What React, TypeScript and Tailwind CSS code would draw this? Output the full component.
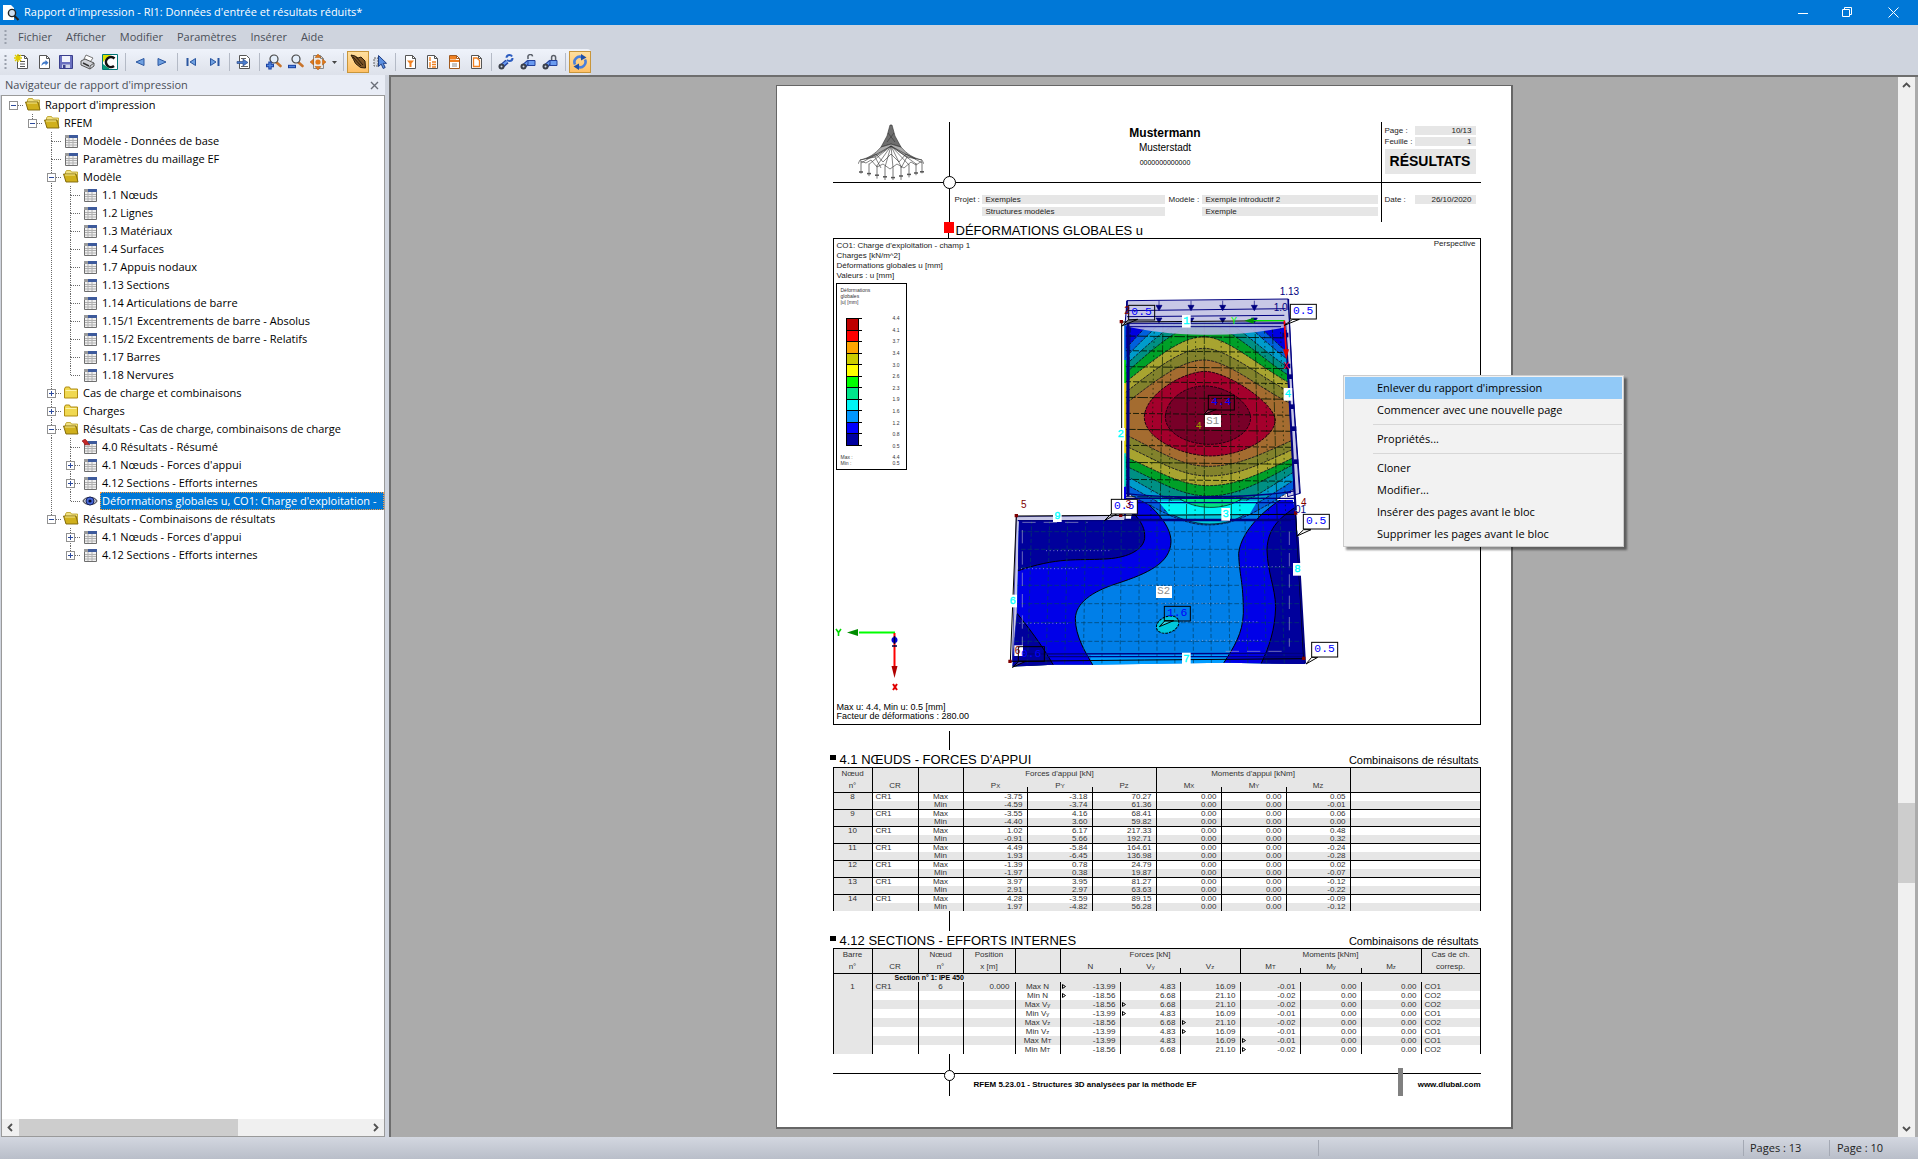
import type { ReactNode } from 'react'

type NodeIcon = 'open' | 'closed' | 'table' | 'pinned' | 'eye'

type TreeRow = {
  depth: number
  label: string
  icon: NodeIcon
  toggle?: '+' | '-'
  selected?: boolean
}

const menus = ['Fichier', 'Afficher', 'Modifier', 'Paramètres', 'Insérer', 'Aide']

const tree: TreeRow[] = [
  { depth: 0, label: "Rapport d'impression", icon: 'open', toggle: '-' },
  { depth: 1, label: 'RFEM', icon: 'open', toggle: '-' },
  { depth: 2, label: 'Modèle - Données de base', icon: 'table' },
  { depth: 2, label: 'Paramètres du maillage EF', icon: 'table' },
  { depth: 2, label: 'Modèle', icon: 'open', toggle: '-' },
  { depth: 3, label: '1.1 Nœuds', icon: 'table' },
  { depth: 3, label: '1.2 Lignes', icon: 'table' },
  { depth: 3, label: '1.3 Matériaux', icon: 'table' },
  { depth: 3, label: '1.4 Surfaces', icon: 'table' },
  { depth: 3, label: '1.7 Appuis nodaux', icon: 'table' },
  { depth: 3, label: '1.13 Sections', icon: 'table' },
  { depth: 3, label: '1.14 Articulations de barre', icon: 'table' },
  { depth: 3, label: '1.15/1 Excentrements de barre - Absolus', icon: 'table' },
  { depth: 3, label: '1.15/2 Excentrements de barre - Relatifs', icon: 'table' },
  { depth: 3, label: '1.17 Barres', icon: 'table' },
  { depth: 3, label: '1.18 Nervures', icon: 'table' },
  { depth: 2, label: 'Cas de charge et combinaisons', icon: 'closed', toggle: '+' },
  { depth: 2, label: 'Charges', icon: 'closed', toggle: '+' },
  { depth: 2, label: 'Résultats - Cas de charge, combinaisons de charge', icon: 'open', toggle: '-' },
  { depth: 3, label: '4.0 Résultats - Résumé', icon: 'pinned' },
  { depth: 3, label: "4.1 Nœuds - Forces d'appui", icon: 'table', toggle: '+' },
  { depth: 3, label: '4.12 Sections - Efforts internes', icon: 'table', toggle: '+' },
  { depth: 3, label: "Déformations globales u, CO1: Charge d'exploitation -", icon: 'eye', selected: true },
  { depth: 2, label: 'Résultats - Combinaisons de résultats', icon: 'open', toggle: '-' },
  { depth: 3, label: "4.1 Nœuds - Forces d'appui", icon: 'table', toggle: '+' },
  { depth: 3, label: '4.12 Sections - Efforts internes', icon: 'table', toggle: '+' },
]

const legend = [
  { color: '#be0000', value: '4.4' },
  { color: '#ff0000', value: '4.1' },
  { color: '#ffa500', value: '3.7' },
  { color: '#cccc00', value: '3.4' },
  { color: '#ffff00', value: '3.0' },
  { color: '#00ff00', value: '2.6' },
  { color: '#00e68c', value: '2.3' },
  { color: '#00f5f5', value: '1.9' },
  { color: '#0096ff', value: '1.6' },
  { color: '#0000ff', value: '1.2' },
  { color: '#0000a0', value: '0.8' },
]

const supports = [
  { node: '8', max: ['-3.75', '-3.18', '70.27', '0.00', '0.00', '0.05'], min: ['-4.59', '-3.74', '61.36', '0.00', '0.00', '-0.01'] },
  { node: '9', max: ['-3.55', '4.16', '68.41', '0.00', '0.00', '0.06'], min: ['-4.40', '3.60', '59.82', '0.00', '0.00', '0.00'] },
  { node: '10', max: ['1.02', '6.17', '217.33', '0.00', '0.00', '0.48'], min: ['-0.91', '5.66', '192.71', '0.00', '0.00', '0.32'] },
  { node: '11', max: ['4.49', '-5.84', '164.61', '0.00', '0.00', '-0.24'], min: ['1.93', '-6.45', '136.98', '0.00', '0.00', '-0.28'] },
  { node: '12', max: ['-1.39', '0.78', '24.79', '0.00', '0.00', '0.02'], min: ['-1.97', '0.38', '19.87', '0.00', '0.00', '-0.07'] },
  { node: '13', max: ['3.97', '3.95', '81.27', '0.00', '0.00', '-0.12'], min: ['2.91', '2.97', '63.63', '0.00', '0.00', '-0.22'] },
  { node: '14', max: ['4.28', '-3.59', '89.15', '0.00', '0.00', '-0.09'], min: ['1.97', '-4.82', '56.28', '0.00', '0.00', '-0.12'] },
]

// mark = index of the value that is the extreme one in the row
const forces = [
  { kind: 'Max N', sub: '', mark: 0, low: true },
  { kind: 'Min N', sub: '', mark: 0, low: false },
  { kind: 'Max V', sub: 'y', mark: 1, low: false },
  { kind: 'Min V', sub: 'y', mark: 1, low: true },
  { kind: 'Max V', sub: 'z', mark: 2, low: false },
  { kind: 'Min V', sub: 'z', mark: 2, low: true },
  { kind: 'Max M', sub: 'T', mark: 3, low: true },
  { kind: 'Min M', sub: 'T', mark: 3, low: false },
]
const lowValues = ['-13.99', '4.83', '16.09', '-0.01', '0.00', '0.00']
const highValues = ['-18.56', '6.68', '21.10', '-0.02', '0.00', '0.00']

/* ---------- small icons ---------- */

function Ico({ children }: { children: ReactNode }) {
  return (
    <svg width="16" height="16" viewBox="0 0 16 16" fill="none" className="shrink-0">
      {children}
    </svg>
  )
}

function Sheet({ stroke = '#555', fill = '#fff' }: { stroke?: string; fill?: string }) {
  return (
    <>
      <path d="M3.5 1.5h7l3 3v10h-10z" fill={fill} stroke={stroke} />
      <path d="M10.5 1.5v3h3" stroke={stroke} />
    </>
  )
}

function Arrow({ d }: { d: string }) {
  return <path d={d} fill="#6fa0e0" stroke="#2a56a0" strokeLinejoin="round" />
}

function Lens({ sign }: { sign: '+' | '-' }) {
  return (
    <Ico>
      <path d="M10 8l4.5 4" stroke="#c8742c" strokeWidth="2.6" strokeLinecap="round" />
      <circle cx="8" cy="5" r="4" fill="#e4eefa" stroke="#444" strokeWidth="1.2" />
      <path d={sign === '+' ? 'M0 11.5h8M4 7.5v8' : 'M0 12.5h8'} stroke="#1b40a0" strokeWidth="3.4" />
      <path d={sign === '+' ? 'M1 11.5h6M4 8.5v6' : 'M1 12.5h6'} stroke="#4f86e0" strokeWidth="1.4" />
    </Ico>
  )
}

function LockIcon({ kind }: { kind: 'sync' | 'open' | 'closed' }) {
  return (
    <Ico>
      <path d="M4 12l5-4.5" stroke="#22409a" strokeWidth="4.6" />
      <path d="M4.5 11.2L9 7.5" stroke="#6a9bf0" strokeWidth="2.2" />
      <circle cx="3.5" cy="12.5" r="3" fill="#3a3f4a" />
      <circle cx="3.5" cy="12.5" r="1" fill="#cfd6e4" />
      {kind === 'sync' ? (
        <circle cx="11.5" cy="4" r="3" stroke="#2c5cc0" strokeWidth="2" strokeDasharray="7.4 2" />
      ) : (
        <>
          <path d={kind === 'open' ? 'M8 5V3.4a2.3 2.3 0 014.6-1' : 'M9.6 7V3.6a2 2 0 014 0V7'} stroke="#5a5f68" strokeWidth="1.5" />
          <path d="M8 6.500h7v5H8z" fill="#6a9bf0" stroke="#22409a" />
        </>
      )}
    </Ico>
  )
}

const toolGroups: { name: string; active?: boolean; icon: ReactNode }[][] = [
  [
    { name: 'Nouveau', icon: <Ico><Sheet /><path d="M6 7.500h5M6 10h5M6 12.500h5" stroke="#555" /><path d="M4 0v8M0 4h8M1 1l6 6M7 1L1 7" stroke="#e0cc00" strokeWidth="1.4" /></Ico> },
    { name: 'Ouvrir', icon: <Ico><Sheet /><path d="M5.5 12c0-3 1.5-4.5 4-4.5V6l3 2.8-3 2.7V9.800c-2 0-3 .6-4 2.200z" fill="#3f78c8" /></Ico> },
    { name: 'Enregistrer', icon: <Ico><path d="M1.5 1.5h13v13h-13z" fill="#6a70c0" stroke="#3a3f8c" /><path d="M4 2h8v6H4z" fill="#f1f3fb" /><path d="M4 10.500h8V14H4z" fill="#d2d6ea" /><path d="M5 11h2.500v3H5z" fill="#3a3f8c" /></Ico> },
    { name: 'Imprimer', icon: <Ico><path d="M6 1l7 3-3 4-6-3z" fill="#fff" stroke="#777" /><path d="M1 7l4-2 9 4v3l-4 3-9-4z" fill="#d0d2d8" stroke="#555" /><path d="M10 15v-3l4-3" stroke="#555" /><path d="M3 9l6 3" stroke="#333" strokeWidth="1.4" /></Ico> },
    { name: 'Dlubal', icon: <Ico><path d="M.5.5h15v15H.5z" fill="#fff" stroke="#077" /><path d="M1 1h8L5 4 1 8z" fill="#d8e000" /><path d="M1 10v5h7z" fill="#0a9a78" /><path d="M12.500 4.500a5 5 0 10-.5 7.500" stroke="#111" strokeWidth="2.600" /></Ico> },
  ],
  [
    { name: 'Précédent', icon: <Ico><Arrow d="M12 4.500v7L4 8z" /></Ico> },
    { name: 'Suivant', icon: <Ico><Arrow d="M4 4.500v7L12 8z" /></Ico> },
  ],
  [
    { name: 'Début', icon: <Ico><path d="M3.500 4v8" stroke="#2a56a0" strokeWidth="2" /><Arrow d="M11.500 4.500v7L6 8z" /></Ico> },
    { name: 'Fin', icon: <Ico><path d="M12.500 4v8" stroke="#2a56a0" strokeWidth="2" /><Arrow d="M4.500 4.500v7L10 8z" /></Ico> },
  ],
  [
    { name: 'Aller à la page', icon: <Ico><path d="M3.500 1.500h7l3 3v10h-10z" fill="#fff" stroke="#555" /><path d="M5 4.500h5M5 12.500h7" stroke="#666" /><path d="M1 7.500h6V5l5 3.500L7 12V9.500H1z" fill="#4a7ccc" stroke="#24427c" strokeWidth=".6" /></Ico> },
  ],
  [
    { name: 'Zoom avant', icon: <Lens sign="+" /> },
    { name: 'Zoom arrière', icon: <Lens sign="-" /> },
    { name: 'Zoom page', icon: <Ico><Sheet fill="#e9e9e9" stroke="#888" /><path d="M8 0l3 3.500H5zM8 16l3-3.500H5zM0 8l3.500-3v6zM16 8l-3.500-3v6z" fill="#e27a1a" stroke="#a85208" strokeWidth=".5" /><circle cx="8" cy="8" r="2.600" fill="#e27a1a" /></Ico> },
  ],
  [
    { name: 'Déplacer', active: true, icon: <Ico><path d="M1 1l4 1 3 2 3-1 4 4 .5 7-5-.5-5-4-2-4z" fill="#7c5426" stroke="#2a1a08" /><path d="M3 3l8 9M6 3l7 8" stroke="#2a1a08" /></Ico> },
    { name: 'Sélectionner', icon: <Ico><path d="M2 4h4v8H2z" fill="#d8dbe2" stroke="#666" strokeDasharray="2 1" /><path d="M6.500 1.500v11l2.700-2.400 2 4.400 2-1-2-4.200h3.300z" fill="#5b8fe0" stroke="#1f3f86" /></Ico> },
  ],
  [
    { name: 'Filtrer', icon: <Ico><Sheet /><path d="M5 6.500h7L9.500 9.500V13h-2V9.500z" fill="#f08020" /></Ico> },
    { name: 'Numérotation', icon: <Ico><Sheet /><path d="M6 3v4M8 8h4M8 10.500h4M8 13h4M6 8v5.500" stroke="#f08020" strokeWidth="1.400" /></Ico> },
    { name: 'En-tête', icon: <Ico><Sheet stroke="#a05a20" /><path d="M4 2h6v3.500H4z" fill="#f08020" /><path d="M4 6h9v2H4z" fill="#f08020" /><path d="M6 10h5M6 12h5" stroke="#8a8a8a" /></Ico> },
    { name: 'Page de garde', icon: <Ico><Sheet /><path d="M5.500 4h3.500l2.500 2.500V12.500h-6z" stroke="#f08020" strokeWidth="1.300" /></Ico> },
  ],
  [
    { name: 'Actualiser les liens', icon: <LockIcon kind="sync" /> },
    { name: 'Déverrouiller', icon: <LockIcon kind="open" /> },
    { name: 'Verrouiller', icon: <LockIcon kind="closed" /> },
  ],
  [
    { name: 'Mise à jour', active: true, icon: <Ico><path d="M3 10.500A5.400 5.400 0 0110 3.200" stroke="#4a7fdc" strokeWidth="2.600" /><path d="M13 5.500A5.400 5.400 0 016 12.800" stroke="#4a7fdc" strokeWidth="2.600" /><path d="M9 0l5.500 3.400L9 6.500zM7 16l-5.500-3.400L7 9.500z" fill="#1e4fa8" /></Ico> },
  ],
]

function TreeIcon({ kind }: { kind: NodeIcon }) {
  if (kind === 'open') {
    return (
      <Ico>
        <path d="M2.500 3l1-1.500h4l1 1.500h6V12h-12z" fill="#f0e080" stroke="#b89c1c" strokeWidth=".8" />
        <path d="M.5 5h12.500l2 8H3z" fill="#d0b01c" stroke="#7c6408" strokeWidth=".9" />
        <path d="M2 6h10" stroke="#f4e890" />
      </Ico>
    )
  }
  if (kind === 'closed') {
    return (
      <Ico>
        <path d="M1.500 4l1-2h4l1 2h7v9h-13z" fill="#f0d850" stroke="#b08c10" />
        <path d="M2.500 5.500h11" stroke="#fdf3a8" />
      </Ico>
    )
  }
  if (kind === 'eye') {
    return (
      <Ico>
        <path d="M1 8c3-5 11-5 14 0-3 5-11 5-14 0z" fill="#c9ccd6" stroke="#55565e" strokeWidth="1.200" />
        <circle cx="8" cy="8" r="4" fill="#4668d8" stroke="#16225c" />
        <circle cx="8" cy="8" r="1.600" fill="#0a0f30" />
      </Ico>
    )
  }
  return (
    <Ico>
      <path d="M2.500 2.500h12v12h-12z" fill="#f0f0f0" stroke="#6e6e6e" />
      <path d="M6 2h9v3H6z" fill="#3d5a9c" />
      <path d="M2 2h4v3H2z" fill="#9a9a9a" />
      <path d="M3 7.500h11M3 9.500h11M3 12h11M6 5v9M10 5v9" stroke="#b0b0b0" />
      {kind === 'pinned' && <path d="M0 2l3-2 2 2 1 2 2 2-2-.5L3 6 2 4z" fill="#c62828" stroke="#8c1010" strokeWidth=".6" />}
    </Ico>
  )
}

/* ---------- window chrome ---------- */

function TitleBar() {
  return (
    <header className="flex h-[25px] shrink-0 items-center bg-[#0078d7] text-white">
      <svg width="18" height="18" viewBox="0 0 18 18" className="ml-[2px]">
        <path d="M1 1h8l3 3v12H1z" fill="#fff" />
        <circle cx="10" cy="9" r="3.600" fill="#cfe0f2" stroke="#222" strokeWidth="1.400" />
        <path d="M12.500 12l4 4" stroke="#222" strokeWidth="2.200" />
      </svg>
      <h1 className="ml-[4px] text-[11px]">Rapport d'impression - RI1: Données d'entrée et résultats réduits*</h1>
      <div className="ml-auto flex pr-[2px] text-white">
        <button aria-label="Réduire" className="flex h-[25px] w-[45px] items-center justify-center">
          <svg width="10" height="10"><path d="M0 5.500h10" stroke="currentColor" /></svg>
        </button>
        <button aria-label="Restaurer" className="flex h-[25px] w-[45px] items-center justify-center">
          <svg width="11" height="11" fill="none" stroke="currentColor"><path d="M.5 2.500h7v7h-7zM2.500 2.500v-2h7v7h-2" /></svg>
        </button>
        <button aria-label="Fermer" className="flex h-[25px] w-[46px] items-center justify-center">
          <svg width="11" height="11" fill="none" stroke="currentColor"><path d="M.5.500l10 10M10.500.500l-10 10" /></svg>
        </button>
      </div>
    </header>
  )
}

function Grip() {
  return (
    <svg width="3" height="14" className="shrink-0">
      <path d="M1.500 0v14" stroke="#9aa0ac" strokeWidth="2" strokeDasharray="2 2" />
    </svg>
  )
}

function MenuBar() {
  return (
    <nav className="flex h-[24px] shrink-0 items-center pl-[4px]">
      <Grip />
      <div className="ml-[11px] flex gap-[14px]">
        {menus.map((m) => (
          <button key={m} className="text-[11px] text-[#4b4f58]">{m}</button>
        ))}
      </div>
    </nav>
  )
}

function Toolbar() {
  return (
    <div className="flex h-[26px] shrink-0 items-center">
      <div className="flex h-[26px] items-center rounded-r bg-gradient-to-b from-[#eff3fb] to-[#dde1ea] pl-[4px]">
        <Grip />
        <div className="ml-[4px] flex">
          {toolGroups.map((group, i) => (
            <div key={i} className="flex items-center">
              {i > 0 && <span className="ml-[4px] mr-[3px] h-[18px] w-px bg-[#b4bac6]" />}
              {group.map((tool) => (
                <button
                  key={tool.name}
                  aria-label={tool.name}
                  className={
                    tool.active
                      ? 'flex h-[22px] w-[22px] items-center justify-center border border-[#c8963c] bg-gradient-to-b from-[#ffdf9e] to-[#ffc066]'
                      : 'flex h-[22px] w-[22px] items-center justify-center'
                  }
                >
                  {tool.icon}
                </button>
              ))}
              {i === 4 && (
                <button aria-label="Options de zoom" className="flex h-[22px] w-[10px] items-center justify-center">
                  <svg width="5" height="3"><path d="M0 0h5L2.500 3z" fill="#444" /></svg>
                </button>
              )}
            </div>
          ))}
        </div>
      </div>
    </div>
  )
}

/* ---------- navigator ---------- */

function continues(index: number, depth: number) {
  for (let i = index + 1; i < tree.length; i++) {
    if (tree[i].depth < depth) return false
    if (tree[i].depth === depth) return true
  }
  return false
}

function Guide({ index, column }: { index: number; column: number }) {
  const row = tree[index]
  const own = column === row.depth
  const more = continues(index, column)
  return (
    <span className="relative flex h-[18px] w-[19px] shrink-0 items-center justify-center">
      <svg width="19" height="18" stroke="#6a6a6a" strokeDasharray="1 1" className="absolute inset-0">
        {own && column > 0 && <path d="M9.500 0v9" />}
        {more && (own ? <path d="M9.500 9v9" /> : <path d="M9.500 0v18" />)}
        {own && <path d="M10 9.500h9" />}
      </svg>
      {own && row.toggle && (
        <button
          aria-label={row.toggle === '+' ? 'Développer' : 'Réduire'}
          className="relative flex h-[9px] w-[9px] items-center justify-center border border-[#919191] bg-white"
        >
          <svg width="7" height="7" stroke="#2c4a9c"><path d={row.toggle === '+' ? 'M1 3.500h5M3.500 1v5' : 'M1 3.500h5'} /></svg>
        </button>
      )}
    </span>
  )
}

function Chevron({ d }: { d: string }) {
  return (
    <svg width="9" height="9" viewBox="0 0 9 9" fill="none" stroke="#505050" strokeWidth="1.800">
      <path d={d} />
    </svg>
  )
}

function Navigator() {
  return (
    <aside className="flex w-[385px] shrink-0 flex-col">
      <div className="flex h-[20px] items-center justify-between bg-[#e9edf6] pl-[5px] pr-[6px]">
        <h2 className="text-[11px] text-[#4b4f58]">Navigateur de rapport d'impression</h2>
        <button aria-label="Fermer le navigateur">
          <svg width="9" height="9" stroke="#6a6e78" strokeWidth="1.400"><path d="M1 1l7 7M8 1L1 8" /></svg>
        </button>
      </div>
      <div className="ml-px flex min-h-0 flex-1 flex-col border border-[#9a9a9a] bg-white">
        <ul className="flex-1 overflow-hidden pl-[2px]">
          {tree.map((row, i) => (
            <li key={i} className="flex h-[18px] items-center">
              {Array.from({ length: row.depth + 1 }, (_, c) => (
                <Guide key={c} index={i} column={c} />
              ))}
              <span className="flex w-[20px] shrink-0 justify-center">
                <TreeIcon kind={row.icon} />
              </span>
              <span
                className={
                  row.selected
                    ? 'h-[18px] flex-1 whitespace-nowrap border border-dotted border-[#ff9a3c] bg-[#0078d7] px-px text-[11px] leading-[16px] text-white'
                    : 'whitespace-nowrap px-[2px] text-[11px] leading-[18px] text-black'
                }
              >
                {row.label}
              </span>
            </li>
          ))}
        </ul>
        <div className="flex h-[17px] items-center bg-[#f0f0f0]">
          <button aria-label="Défiler à gauche" className="flex w-[17px] justify-center"><Chevron d="M6 1L2.500 4.500 6 8" /></button>
          <div className="h-full flex-1"><div className="h-full w-[63%] bg-[#cdcdcd]" /></div>
          <button aria-label="Défiler à droite" className="flex w-[17px] justify-center"><Chevron d="M3 1l3.500 3.500L3 8" /></button>
        </div>
      </div>
    </aside>
  )
}

/* ---------- report page ---------- */

function TentLogo() {
  const ribs = [-30, -22, -14, -6, 2, 10, 18, 25, 31]
  return (
    <svg width="66" height="56" viewBox="-33 0 66 56" fill="none" stroke="#333" strokeWidth=".6">
      <path d="M-1 1h2L4 12 10 23 0 20-10 23-4 12z" fill="#4a4a4a" fillOpacity=".8" />
      <path d="M-10 23C-16 30-22 34-31 36L-16 33 0 22l16 11 15 3C22 34 16 30 10 23L0 20z" fill="#888" fillOpacity=".7" />
      {ribs.map((x) => (
        <g key={x}>
          <path d={`M0 22L${x} ${44 - Math.abs(x) / 6}`} />
          <path d={`M${x} ${38 + (30 - Math.abs(x)) / 5}v${15 - Math.abs(x) / 9}`} stroke="#777" strokeWidth="1" />
          <path d={`M${x - 2} ${54 - Math.abs(x) / 5}h4`} stroke="#555" strokeWidth="1.500" />
        </g>
      ))}
      <path d="M-31 37l6 2 5-3 6 7 6-3 7 5 7-5 7 4 7-6 5 3 6-4M-25 35l10-5 7 8 8-8 8 8 7-8 10 5M-31 36l-2 4M31 36l2 4" />
      <path d="M-16 33L-10 44M16 33l-6 11M-3 9l7 9M3 9l-7 9" />
    </svg>
  )
}

function Ring({ x, fill, l, r, t, b, lb, rb }: { x: number; fill: string; l: number; r: number; t: number; b: number; lb: number; rb: number }) {
  const d =
    `M390 ${l} C490 ${l - (l - t) * 0.55} 570 ${t} ${x} ${t} S820 ${r - (r - t) * 0.3} 910 ${r}` +
    ` V${rb} C810 ${rb + (b - rb) * 0.55} 740 ${b} ${x + 12} ${b} S490 ${lb + (b - lb) * 0.45} 390 ${lb}Z`
  return <path d={d} fill={fill} stroke="#101020" strokeWidth="2.500" strokeDasharray="9 3" />
}

function Tag({ x, y, text, clear }: { x: number; y: number; text: string; clear?: boolean }) {
  return (
    <g>
      <rect x={x} y={y} width="78" height="44" fill={clear ? 'none' : '#fff'} stroke="#000" strokeWidth="3" />
      <text x={x + 8} y={y + 30} fontSize="34" fill="#0000ff">{text}</text>
    </g>
  )
}

function LineNo({ x, y, text }: { x: number; y: number; text: string }) {
  return (
    <g>
      <rect x={x - 13} y={y - 18} width="26" height="38" fill="#fff" />
      <text x={x} y={y + 10} fontSize="32" textAnchor="middle" fill="#00ffff" stroke="#00ffff">{text}</text>
    </g>
  )
}

function NodeNo({ x, y, text, fill = '#800000' }: { x: number; y: number; text: string; fill?: string }) {
  return <text x={x} y={y} fontSize="30" fill={fill} className="font-['Liberation_Sans',Arial,sans-serif]">{text}</text>
}

// Deformed plate: local units are a third of a pixel
function Model() {
  const top = [504, 600, 695, 790]
  return (
    <svg width="360" height="390" viewBox="0 0 1080 1170" fill="none" className="shrink-0 font-['Liberation_Mono','Courier_New',monospace]">
      <clipPath id="s1"><path d="M402 128H880L890 300L914 700V740H402z" /></clipPath>
      <clipPath id="s2"><path d="M84 722L420 720L430 660H905L915 700L943 1152L700 1148L306 1154L186 1154L64 1160L78 1000z" /></clipPath>

      {/* load area */}
      <path d="M408 62L892 57L906 330L928 640L890 650L880 128L402 134z" fill="#c8c8e6" stroke="#000080" strokeWidth="3" />
      <path d="M76 710L402 706V724L90 722L78 1000L64 1144z" fill="#c8c8e6" stroke="#000080" strokeWidth="2" />

      {/* lower plate */}
      <g clipPath="url(#s2)">
        <path d="M50 640H960V1170H50z" fill="#007fe8" />
        <path d="M300 1125H830V1170H300z" fill="#009cff" />
        <path d="M50 630H420C500 690 540 740 540 785C538 850 470 880 380 910C300 935 255 970 253 1015C253 1070 285 1120 306 1156H50z" fill="#0000e8" stroke="#000" strokeWidth="3" />
        <path d="M50 690H420C455 730 462 745 461 775C455 815 400 835 340 837C260 842 200 830 76 874z" fill="#00009c" stroke="#000" strokeWidth="3" />
        <path d="M78 1000C110 1040 150 1090 190 1160H50V1000z" fill="#00009c" stroke="#000" strokeWidth="3" />
        <path d="M940 620C830 670 750 750 743 820C745 890 757 900 757 1000C755 1060 730 1100 696 1152H960V620z" fill="#0000e8" stroke="#000" strokeWidth="3" />
        <path d="M930 670C870 710 830 740 828 810C830 880 852 920 854 980C852 1050 835 1100 808 1156H960V670z" fill="#00009c" stroke="#000" strokeWidth="3" />
        {[155, 208, 262, 316, 371, 428, 484].map((y) => (
          <path key={y} d={`M50 ${y + 600}H960`} stroke="#004060" strokeWidth="2" strokeDasharray="14 6" />
        ))}
        {[122, 176, 230, 284, 338, 391, 445, 498, 550, 604, 656, 710, 762, 816, 868].map((x) => (
          <path key={x} d={`M${x} 720L${x + (x - 500) / 30} 1160`} stroke="#004060" strokeWidth="2" strokeDasharray="12 7" />
        ))}
        <path d="M165 812H360M90 866H260M85 1030H230M450 916H640M655 860H880M565 1025H800M600 1081H820M500 970H700" stroke="#b8b8e0" strokeWidth="2" strokeDasharray="3 8" />
        <path d="M94 727H290M704 1114H890M94 750V1110M895 755V1100" stroke="#a0a0c8" strokeWidth="2" strokeDasharray="40 24" />
      </g>
      <ellipse cx="530" cy="1034" rx="35" ry="24" transform="rotate(-22 530 1034)" fill="#00c8dc" stroke="#000" strokeWidth="3" strokeDasharray="8 3" />

      {/* upper plate */}
      <g clipPath="url(#s1)">
        <path d="M400 120H900V640H400z" fill="#0000e0" />
        <Ring x={640} fill="#0060dc" l={222} r={232} t={20} b={735} lb={632} rb={626} />
        <Ring x={640} fill="#009ccc" l={246} r={252} t={60} b={715} lb={606} rb={600} />
        <Ring x={640} fill="#009084" l={268} r={274} t={100} b={690} lb={580} rb={575} />
        <Ring x={640} fill="#00a028" l={292} r={296} t={130} b={648} lb={552} rb={552} />
        <Ring x={640} fill="#a8a430" l={318} r={316} t={170} b={617} lb={525} rb={532} />
        <Ring x={640} fill="#82822c" l={348} r={342} t={205} b={588} lb={492} rb={506} />
        <Ring x={640} fill="#a46c30" l={382} r={376} t={240} b={559} lb={458} rb={478} />
        <path d="M520 690H780C740 722 700 732 655 732C610 732 560 716 520 690z" fill="#00c8dc" stroke="#000" strokeWidth="2" />
        <path d="M500 662H800L775 704H535z" fill="#00f5f5" />
        <path d="M560 652C610 690 700 694 755 654z" fill="#00e080" stroke="#000" strokeWidth="2" />
        <path d="M460 410C462 350 560 280 640 274C710 274 850 370 853 420C852 470 760 528 655 528C560 525 458 470 460 410z" fill="#a4002c" stroke="#200010" strokeWidth="3" strokeDasharray="9 3" />
        <path d="M523 410C525 360 580 318 640 318C710 318 778 370 779 415C776 460 720 493 655 493C580 492 522 455 523 410z" fill="#780028" stroke="#200010" strokeWidth="3" strokeDasharray="9 3" />
        {[418, 490, 516, 541, 590, 614, 640, 690, 716, 740, 792, 820, 844, 868].map((x, i) => (
          <path key={x} d={`M${x} 128L${x + (x - 640) / 14} 720`} stroke="#001c00" strokeWidth="2" strokeDasharray={i % 2 ? '5 9' : '30 4'} />
        ))}
        {[170, 214, 262, 307, 354, 402, 450, 498, 549, 600, 652].map((y, i) => (
          <path key={y} d={`M402 ${y - 2}L910 ${y + 4}`} stroke="#001000" strokeWidth="2.500" strokeDasharray={i % 2 ? '18 6' : '32 5'} />
        ))}
        <path d="M402 640C500 655 800 655 914 632M402 668H914M402 655H914" stroke="#000080" strokeWidth="4" />
        <path d="M402 120H884V142C800 158 720 166 640 164C540 164 460 152 402 138z" fill="#b4b4e0" fillOpacity=".9" />
      </g>
      <path d="M402 134V240" stroke="#0060dc" strokeWidth="5" />
      <path d="M402 240V310" stroke="#00e000" strokeWidth="5" />
      <path d="M402 310V520" stroke="#e8d800" strokeWidth="5" />
      <path d="M402 520V620" stroke="#00e0c0" strokeWidth="5" />
      <path d="M402 620V706" stroke="#0000f0" strokeWidth="6" />
      <path d="M411 128V650" stroke="#000080" strokeWidth="9" />

      {/* load lines and arrows */}
      <path d="M408 92L884 86M408 110L880 106M408 130H880M408 140H870M892 57L905 330L926 640M884 128L912 690" stroke="#000080" strokeWidth="3" />
      <path d="M408 62V100M892 57V90" stroke="#000080" strokeWidth="5" />
      {top.map((x) => (
        <path key={x} d={`M${x} 62V80M${x - 9} 76H${x + 9}L${x} 92zM${x - 9} 114H${x + 9}L${x} 128z`} fill="#000080" stroke="#000080" strokeWidth="2" />
      ))}
      {[165, 258, 290, 380, 446, 545].map((y, i) => (
        <path key={y} d={`M${874 + i * 7} ${y - 7}H${892 + i * 6}V${y + 7}H${874 + i * 7}z`} fill="#000080" />
      ))}
      <path d="M80 722H900M400 718H915" stroke="#000080" strokeWidth="4" />
      <path d="M80 1122L940 1120M170 1130H940" stroke="#000080" strokeWidth="4" />

      {/* undeformed outline */}
      <path d="M392 126V706M392 126L880 122M76 708L914 703M76 708L58 1144L460 1140L938 1136L914 700" stroke="#000" strokeWidth="3" />
      <path d="M884 150L914 690M920 770L942 1150" stroke="#000080" strokeWidth="6" />

      {/* local axes */}
      <path d="M780 122H880" stroke="#00e000" strokeWidth="4" />
      <path d="M760 122L788 113V131z" fill="#009000" />
      <text x="720" y="131" fontSize="30" fill="#00ff00">Y</text>
      <path d="M880 122L885 210" stroke="#ff0000" strokeWidth="5" />
      <path d="M886 238L876 208H894z" fill="#e00000" />
      <text x="877" y="266" fontSize="30" fill="#ff0000">X</text>

      {/* nodes */}
      <path d="M386 120h10v10h-10zM384 701h10v10h-10zM71 702h10v10h-10zM52 1139h10v10h-10zM933 1130h10v10h-10zM909 694h10v10h-10z" fill="#800000" />
      <path d="M392 138L412 120L440 118zM880 136L905 118H925zM340 722L364 698H384zM918 768L938 749H960zM64 1162L84 1144H104zM945 1152L962 1132H980zM638 404L652 388H676zM505 1040L522 1022H548z" fill="#fff" fillOpacity=".2" stroke="#000" strokeWidth="3" />

      <Tag x={413} y={76} text="0.5" clear />
      <Tag x={898} y={73} text="0.5" />
      <Tag x={652} y={346} text="4.4" clear />
      <Tag x={361} y={658} text="0.5" />
      <Tag x={937} y={703} text="0.5" />
      <Tag x={520} y={979} text="1.6" clear />
      <Tag x={962} y={1087} text="0.5" />
      <rect x="70" y="1096" width="26" height="32" fill="#fff" />
      <Tag x={82} y={1100} text="0.6" clear />

      <NodeNo x={866} y={45} text="1.13" fill="#000080" />
      <NodeNo x={848} y={93} text="1.0" fill="#000080" />
      <NodeNo x={400} y={101} text="2" />
      <NodeNo x={404} y={684} text="3" />
      <NodeNo x={90} y={684} text="5" />
      <NodeNo x={930} y={678} text="4" />
      <NodeNo x={912} y={700} text="01" fill="#000080" />
      <NodeNo x={71} y={1122} text="6" />
      <text x="614" y="446" fontSize="30" fill="#a0a000">4</text>
      <rect x="642" y="405" width="48" height="36" fill="#fff" />
      <text x="646" y="431" fontSize="32" fill="#8c8c8c">S1</text>
      <rect x="495" y="918" width="48" height="36" fill="#fff" />
      <text x="499" y="943" fontSize="32" fill="#8c8c8c">S2</text>
      <LineNo x={586} y={123} text="1" />
      <LineNo x={389} y={462} text="2" />
      <LineNo x={704} y={702} text="3" />
      <LineNo x={891} y={342} text="4" />
      <LineNo x={65} y={962} text="6" />
      <LineNo x={586} y={1136} text="7" />
      <LineNo x={919} y={867} text="8" />
      <LineNo x={199} y={706} text="9" />
    </svg>
  )
}

function Axes() {
  return (
    <svg width="70" height="80" className="shrink-0">
      <path d="M25 9.500h36" stroke="#00ff00" strokeWidth="2" />
      <path d="M13 9.500l11-3.500v7z" fill="#008c00" />
      <path d="M2 6l2.500 3.500L7 6M4.500 9v4" stroke="#00d800" strokeWidth="1.600" fill="none" />
      <path d="M60.500 10v35" stroke="#ff0000" strokeWidth="2" />
      <path d="M60.500 55l-3-12h6z" fill="#b00000" />
      <circle cx="60.500" cy="17" r="3" fill="#0000e0" />
      <path d="M60.500 13v8M58 23h5" stroke="#000040" strokeWidth="1.500" />
      <path d="M59 61l4 6M63 61l-4 6" stroke="#e00000" strokeWidth="2" />
    </svg>
  )
}

function Legend() {
  return (
    <div className="mt-[2px] ml-[-1px] flex h-[187px] w-[71px] flex-col border border-black px-[4px] pt-[3px] text-[5px] leading-[6px] text-[#333]">
      <p>Déformations<br />globales<br />|u| [mm]</p>
      <div className="mt-[10px] flex justify-between">
        <div className="ml-[5px] mt-[3px] h-[128px] border-b border-black">
          {legend.map((step) => (
            <div key={step.value} className="flex h-[11px] w-[16px] border-t border-black odd:h-[12px]">
              <div className="w-[13px] border-x border-black" style={{ backgroundColor: step.color }} />
              <div className="flex-1 bg-white" />
            </div>
          ))}
        </div>
        <div className="flex h-[134px] flex-col justify-between pr-[2px] text-right">
          {legend.map((step) => <span key={step.value}>{step.value}</span>)}
          <span>0.5</span>
        </div>
      </div>
      <div className="mt-[5px] flex justify-between pr-[2px]"><span>Max :</span><span>4.4</span></div>
      <div className="flex justify-between pr-[2px]"><span>Min :</span><span>0.5</span></div>
    </div>
  )
}

function Field({ children, className = '' }: { children: ReactNode; className?: string }) {
  return <span className={`block h-[9px] bg-[#e6e6e6] px-[4px] text-[8px] leading-[9px] ${className}`}>{children}</span>
}

function PageHeader() {
  return (
    <div className="relative text-[8px] leading-[9px] text-[#222]">
      <div className="flex h-[61px] border-b border-black">
        <div className="flex w-[116px] justify-center pt-[2px]"><TentLogo /></div>
        <div className="flex-1 border-l border-black text-center text-black">
          <p className="mt-[3px] text-[12px] font-bold leading-[16px]">Mustermann</p>
          <p className="text-[10px] leading-[14px]">Musterstadt</p>
          <p className="text-[7px] leading-[16px]">0000000000000</p>
        </div>
        <div className="w-[100px] border-l border-black pl-[3px] pr-[5px] pt-[4px]">
          <div className="flex justify-between"><span>Page :</span><Field className="w-[61px] text-right">10/13</Field></div>
          <div className="mt-[2px] flex justify-between"><span>Feuille :</span><Field className="w-[61px] text-right">1</Field></div>
          <p className="mt-[3px] bg-[#e6e6e6] text-center text-[14px] font-bold leading-[25px] text-black">RÉSULTATS</p>
        </div>
      </div>
      <div className="flex h-[39px]">
        <div className="w-[116px]" />
        <div className="flex flex-1 gap-[4px] border-l border-black pl-[5px] pr-[3px] pt-[12px]">
          <span className="w-[23px] whitespace-nowrap">Projet :</span>
          <div className="flex w-[183px] flex-col gap-[3px]"><Field>Exemples</Field><Field>Structures modèles</Field></div>
          <span className="w-[29px] whitespace-nowrap">Modèle :</span>
          <div className="flex flex-1 flex-col gap-[3px]"><Field>Exemple introductif 2</Field><Field>Exemple</Field></div>
        </div>
        <div className="w-[100px] border-l border-black pl-[3px] pr-[5px] pt-[12px]">
          <div className="flex justify-between"><span>Date :</span><Field className="w-[61px] text-right">26/10/2020</Field></div>
        </div>
      </div>
      <span className="absolute left-[110px] top-[54px] h-[13px] w-[13px] rounded-full border border-black bg-white" />
    </div>
  )
}

function Figure() {
  return (
    <section>
      <div className="flex h-[16px]">
        <div className="ml-[110px] flex w-[12px] flex-col items-center">
          <span className="h-[11px] w-[10px] bg-[#ff0000]" />
          <span className="w-px flex-1 bg-black" />
        </div>
        <h3 className="pl-px text-[13px] leading-[18px] text-black">DÉFORMATIONS GLOBALES u</h3>
      </div>
      <div className="flex h-[487px] border border-black">
        <div className="flex w-[157px] flex-col whitespace-nowrap pl-[3px] pt-[2px] text-[8px] leading-[10px] text-[#222]">
          <p>CO1: Charge d'exploitation - champ 1</p>
          <p>Charges [kN/m^2]</p>
          <p>Déformations globales u [mm]</p>
          <p>Valeurs : u [mm]</p>
          <Legend />
          <div className="ml-[-3px] mt-auto"><Axes /></div>
          <p className="text-[9px] leading-[9px] text-black">Max u: 4.4, Min u: 0.5 [mm]</p>
          <p className="pb-[3px] text-[9px] leading-[9px] text-black">Facteur de déformations : 280.00</p>
        </div>
        <div className="pt-[41px]"><Model /></div>
        <p className="flex-1 pr-[4px] text-right text-[8px] leading-[10px] text-[#222]">Perspective</p>
      </div>
    </section>
  )
}

function TableHeading({ title }: { title: string }) {
  return (
    <div className="flex h-[17px]">
      <span className="ml-[-3px] mr-[4px] mt-[5px] h-[5px] w-[6px] bg-black" />
      <h3 className="text-[13px] leading-[19px] text-black">{title}</h3>
      <span className="ml-auto pr-[2px] text-[11px] leading-[20px] text-black">Combinaisons de résultats</span>
    </div>
  )
}

function Stem({ className }: { className: string }) {
  return <div className={`ml-[116px] w-px bg-black ${className}`} />
}

function SubHead({ base, sub, tick }: { base: string; sub: string; tick?: boolean }) {
  return (
    <th className={tick ? 'relative font-normal' : 'relative border-r border-black font-normal'}>
      {base}
      <span className="text-[6px]">{sub}</span>
      {tick && <span className="absolute bottom-0 right-0 h-[5px] w-px bg-black" />}
    </th>
  )
}

function SupportTable() {
  return (
    <table className="w-full table-fixed border-separate border-spacing-0 border-l border-t border-black text-[8px] leading-[8px] text-[#333]">
      <colgroup>
        <col className="w-[39px]" /><col className="w-[46px]" /><col className="w-[45px]" />
        <col className="w-[64px]" /><col className="w-[65px]" /><col className="w-[64px]" />
        <col className="w-[65px]" /><col className="w-[65px]" /><col className="w-[64px]" /><col />
      </colgroup>
      <thead className="bg-[#e6e6e6]">
        <tr className="h-[11px]">
          <th className="border-r border-black font-normal">Nœud</th>
          <th className="border-r border-black" />
          <th className="border-r border-black" />
          <th colSpan={3} className="border-r border-black font-normal">Forces d'appui [kN]</th>
          <th colSpan={3} className="border-r border-black font-normal">Moments d'appui [kNm]</th>
          <th className="border-r border-black" />
        </tr>
        <tr className="h-[13px]">
          <th className="border-r border-black font-normal">n°</th>
          <th className="border-r border-black font-normal">CR</th>
          <th className="border-r border-black" />
          <SubHead base="P" sub="X" tick />
          <SubHead base="P" sub="Y" tick />
          <SubHead base="P" sub="Z" />
          <SubHead base="M" sub="X" tick />
          <SubHead base="M" sub="Y" tick />
          <SubHead base="M" sub="Z" />
          <th className="border-r border-black" />
        </tr>
      </thead>
      {supports.map((s) => (
        <tbody key={s.node} className="text-right">
          <tr className="h-[9px]">
            <td className="border-r border-t border-black bg-[#e6e6e6] text-center">{s.node}</td>
            <td className="border-r border-t border-black pl-[3px] text-left">CR1</td>
            <td className="border-r border-t border-black text-center">Max</td>
            {s.max.map((v, i) => <td key={i} className="border-r border-t border-black pr-[4px]">{v}</td>)}
            <td className="border-r border-t border-black" />
          </tr>
          <tr className="h-[8px] bg-[#e6e6e6]">
            <td className="border-r border-black" />
            <td className="border-r border-black" />
            <td className="border-r border-black text-center">Min</td>
            {s.min.map((v, i) => <td key={i} className="border-r border-black pr-[4px]">{v}</td>)}
            <td className="border-r border-black" />
          </tr>
        </tbody>
      ))}
    </table>
  )
}

function ForceTable() {
  return (
    <table className="w-full table-fixed border-separate border-spacing-0 border-l border-t border-black text-[8px] leading-[8px] text-[#333]">
      <colgroup>
        <col className="w-[39px]" /><col className="w-[46px]" /><col className="w-[45px]" /><col className="w-[52px]" />
        <col className="w-[45px]" /><col className="w-[60px]" /><col className="w-[60px]" /><col className="w-[60px]" />
        <col className="w-[60px]" /><col className="w-[61px]" /><col className="w-[60px]" /><col />
      </colgroup>
      <thead className="bg-[#e6e6e6]">
        <tr className="h-[11px]">
          <th className="border-r border-black font-normal">Barre</th>
          <th className="border-r border-black" />
          <th className="border-r border-black font-normal">Nœud</th>
          <th className="border-r border-black font-normal">Position</th>
          <th className="border-r border-black" />
          <th colSpan={3} className="border-r border-black font-normal">Forces [kN]</th>
          <th colSpan={3} className="border-r border-black font-normal">Moments [kNm]</th>
          <th className="border-r border-black font-normal">Cas de ch.</th>
        </tr>
        <tr className="h-[13px]">
          <th className="border-r border-black font-normal">n°</th>
          <th className="border-r border-black font-normal">CR</th>
          <th className="border-r border-black font-normal">n°</th>
          <th className="border-r border-black font-normal">x [m]</th>
          <th className="border-r border-black" />
          <SubHead base="N" sub="" tick />
          <SubHead base="V" sub="y" tick />
          <SubHead base="V" sub="z" />
          <SubHead base="M" sub="T" tick />
          <SubHead base="M" sub="y" tick />
          <SubHead base="M" sub="z" />
          <th className="border-r border-black font-normal">corresp.</th>
        </tr>
      </thead>
      <tbody className="text-right">
        <tr className="h-[9px] bg-[#e6e6e6]">
          <td className="border-r border-t border-black" />
          <td colSpan={11} className="border-r border-t border-black pl-[22px] text-left text-[7px] font-bold text-black">Section n° 1: IPE 450</td>
        </tr>
        {forces.map((row, i) => (
          <tr key={i} className={i % 2 ? 'h-[9px]' : 'h-[9px] bg-[#e6e6e6]'}>
            <td className="border-r border-black bg-[#e6e6e6] text-center">{i === 0 && '1'}</td>
            <td className="border-r border-black pl-[3px] text-left">{i === 0 && 'CR1'}</td>
            <td className="border-r border-black text-center">{i === 0 && '6'}</td>
            <td className="border-r border-black pr-[5px]">{i === 0 && '0.000'}</td>
            <td className="border-r border-black text-center">
              {row.kind}<span className="text-[6px]">{row.sub}</span>
            </td>
            {(row.low ? lowValues : highValues).map((v, c) => (
              <td key={c} className="border-r border-black pr-[4px]">
                {row.mark === c ? (
                  <span className="flex items-center justify-between pl-px">
                    <svg width="4" height="5"><path d="M.5.500v4l3-2z" fill="none" stroke="#000" /></svg>
                    {v}
                  </span>
                ) : v}
              </td>
            ))}
            <td className="border-r border-black pl-[3px] text-left">{row.low ? 'CO1' : 'CO2'}</td>
          </tr>
        ))}
      </tbody>
    </table>
  )
}

function ReportPage() {
  return (
    <article className="mx-auto mt-[8px] w-[737px] border-b-2 border-l border-r-2 border-t border-[#666] bg-white pb-[31px] pl-[56px] pr-[30px] pt-[36px] font-['Liberation_Sans',Arial,sans-serif]">
      <PageHeader />
      <Figure />
      <Stem className="mt-[6px] h-[19px]" />
      <TableHeading title="4.1 NŒUDS - FORCES D'APPUI" />
      <SupportTable />
      <Stem className="h-[20px]" />
      <TableHeading title="4.12 SECTIONS - EFFORTS INTERNES" />
      <ForceTable />
      <footer className="relative flex h-[42px] flex-col text-[8px] font-bold text-black">
        <Stem className="h-[21px]" />
        <div className="h-px bg-black" />
        <div className="flex flex-1">
          <span className="w-[116px]" />
          <span className="flex-1 border-l border-black pl-[24px] leading-[22px]">RFEM 5.23.01 - Structures 3D analysées par la méthode EF</span>
          <a href="#dlubal" className="leading-[22px]">www.dlubal.com</a>
        </div>
        <span className="absolute left-[111px] top-[16px] h-[11px] w-[11px] rounded-full border border-black bg-white" />
        <span className="absolute right-[78px] top-[14px] h-[28px] w-[5px] bg-[#808080]" />
      </footer>
    </article>
  )
}

/* ---------- context menu and status ---------- */

const contextGroups = [
  ["Enlever du rapport d'impression", 'Commencer avec une nouvelle page'],
  ['Propriétés...'],
  ['Cloner', 'Modifier...', 'Insérer des pages avant le bloc', 'Supprimer les pages avant le bloc'],
]

function ContextMenu() {
  return (
    <div className="absolute left-[1343px] top-[375px] w-[281px] border border-[#ccc] bg-[#f2f2f2] p-px shadow-[3px_3px_2px_rgba(0,0,0,0.45)]">
      {contextGroups.map((group, g) => (
        <div key={g}>
          {g > 0 && <div className="my-[3px] ml-[28px] h-px bg-[#d7d7d7]" />}
          {group.map((label, i) => (
            <button
              key={label}
              className={
                g === 0 && i === 0
                  ? 'block h-[22px] w-full bg-[#91c9f7] pl-[32px] text-left text-[11px] text-black'
                  : 'block h-[22px] w-full pl-[32px] text-left text-[11px] text-black'
              }
            >
              {label}
            </button>
          ))}
        </div>
      ))}
    </div>
  )
}

export default function App() {
  return (
    <div className="relative flex h-screen flex-col overflow-hidden bg-[#cfd4de] font-['Open_Sans','Noto_Sans',sans-serif]">
      <TitleBar />
      <MenuBar />
      <Toolbar />
      <div className="flex min-h-0 flex-1">
        <Navigator />
        <main className="ml-[4px] flex min-w-0 flex-1 border-l-2 border-t-2 border-[#6e6e6e] bg-[#ababab]">
          <div className="min-w-0 flex-1 overflow-hidden pr-px">
            <ReportPage />
          </div>
          <div className="mr-[3px] flex w-[17px] flex-col items-center bg-[#f0f0f0]">
            <button aria-label="Défiler vers le haut" className="flex h-[17px] items-center"><Chevron d="M1 6l3.500-3.500L8 6" /></button>
            <div className="w-full flex-[709]" />
            <div className="w-full flex-[80] bg-[#cdcdcd]" />
            <div className="w-full flex-[237]" />
            <button aria-label="Défiler vers le bas" className="flex h-[17px] items-center"><Chevron d="M1 3l3.500 3.500L8 3" /></button>
          </div>
        </main>
      </div>
      <footer className="flex h-[22px] shrink-0 items-center bg-gradient-to-b from-[#d3d7e0] to-[#b9bec9] text-[11px] text-[#222]">
        <span className="h-[16px] flex-[1320] border-r border-[#a4a9b4]" />
        <span className="h-[16px] flex-[424] border-r border-[#a4a9b4]" />
        <span className="w-[86px] border-r border-[#a4a9b4] pl-[6px] leading-[16px]">Pages : 13</span>
        <span className="w-[88px] pl-[7px] leading-[16px]">Page : 10</span>
      </footer>
      <ContextMenu />
    </div>
  )
}
